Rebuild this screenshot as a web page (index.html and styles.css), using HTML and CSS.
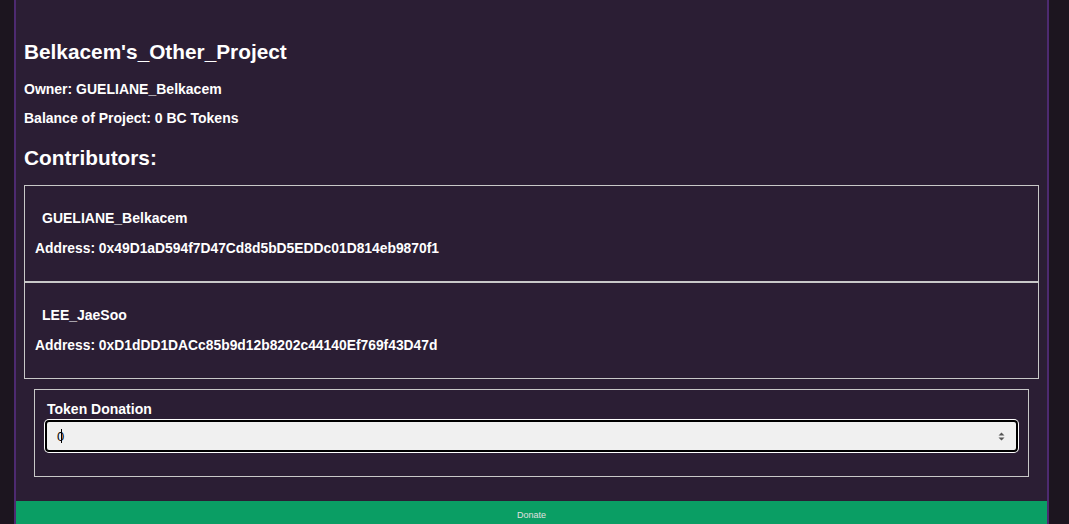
FILE: index.html
```html
<!DOCTYPE html>
<html>
<head>
<meta charset="utf-8">
<link rel="stylesheet" href="styles.css">
</head>
<body>
<div class="panel">
  <div class="content">
    <h2 class="title">Belkacem's_Other_Project</h2>
    <p class="info">Owner: GUELIANE_Belkacem</p>
    <p class="info">Balance of Project: 0 BC Tokens</p>
    <h2 class="subtitle">Contributors:</h2>
    <div class="contributors">
      <div class="contributor">
        <p class="name">GUELIANE_Belkacem</p>
        <p class="address">Address: 0x49D1aD594f7D47Cd8d5bD5EDDc01D814eb9870f1</p>
      </div>
      <div class="contributor">
        <p class="name">LEE_JaeSoo</p>
        <p class="address">Address: 0xD1dDD1DACc85b9d12b8202c44140Ef769f43D47d</p>
      </div>
    </div>
    <div class="donation">
      <label class="label">Token Donation</label>
      <div class="input">
        <span class="value">0</span><span class="caret"></span>
        <svg class="spin" width="7" height="9" viewBox="0 0 7 9"><path d="M3.5 0.5 L6.5 3.5 H0.5 Z M0.5 5.5 H6.5 L3.5 8.5 Z" fill="#555"/></svg>
      </div>
    </div>
  </div>
  <button class="donate">Donate</button>
</div>
</body>
</html>
```

FILE: styles.css
```css
html, body {
  margin: 0;
  padding: 0;
  background: #1c151f;
  font-family: "Liberation Sans", Arial, sans-serif;
  color: #fff;
  overflow: hidden;
}
.panel {
  margin-left: 14px;
  width: 1031px;
  border-left: 2px solid #4d2a70;
  border-right: 2px solid #4d2a70;
  background: #2b1e34;
  height: 524px;
  overflow: hidden;
}
.content {
  padding: 40px 8px 24px 8px;
}
.title {
  margin: 0;
  font-size: 20.8px;
  line-height: 23px;
  font-weight: bold;
}
.info {
  margin: 18px 0 0 0;
  font-size: 14px;
  line-height: 16px;
  font-weight: bold;
}
.info + .info {
  margin-top: 13px;
}
.subtitle {
  margin: 20px 0 0 0;
  font-size: 20.8px;
  line-height: 23px;
  font-weight: bold;
}
.contributors {
  margin-top: 16px;
  display: flex;
  flex-direction: column;
}
.contributor {
  border: 1px solid #c8c8c8;
  height: 95px;
  padding: 0 10px;
}
.name {
  margin: 24px 0 0 7px;
  font-size: 14px;
  line-height: 16px;
  font-weight: bold;
}
.address {
  margin: 14px 0 0 0;
  font-size: 13.85px;
  line-height: 16px;
  font-weight: bold;
}
.donation {
  margin: 10px 10px 0 10px;
  border: 1px solid #c8c8c8;
  height: 88px;
  padding: 0 10px;
  box-sizing: border-box;
}
.label {
  display: block;
  margin: 11px 0 0 2px;
  font-size: 14px;
  line-height: 16px;
  font-weight: bold;
}
.input {
  position: relative;
  margin-top: 3px;
  height: 28px;
  border: 2px solid #000;
  border-radius: 4px;
  box-shadow: 0 0 0 1px #fff;
  background: #f0f0f0;
  display: flex;
  align-items: center;
  padding-left: 10px;
  color: #000;
  font-size: 13px;
}
.caret {
  display: inline-block;
  width: 1px;
  height: 14px;
  background: #000;
  margin-left: -3px;
}
.spin {
  position: absolute;
  right: 11px;
  top: 10px;
}
.donate {
  display: block;
  width: 100%;
  height: 28px;
  border: none;
  background: #0a9e64;
  color: #e0e0e0;
  font-family: "Liberation Sans", Arial, sans-serif;
  font-size: 9px;
  padding: 0;
}
```
